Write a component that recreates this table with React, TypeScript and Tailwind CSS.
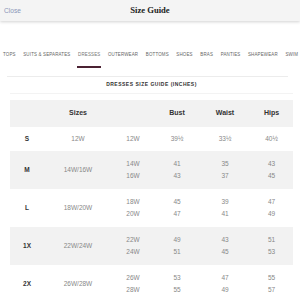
import React from "react";

const tabs = ["TOPS", "SUITS & SEPARATES", "DRESSES", "OUTERWEAR", "BOTTOMS", "SHOES", "BRAS", "PANTIES", "SHAPEWEAR", "SWIM"];

const rows = [
  { label: "S", size: "12W", sub: ["12W"], bust: ["39½"], waist: ["33½"], hips: ["40½"] },
  { label: "M", size: "14W/16W", sub: ["14W", "16W"], bust: ["41", "43"], waist: ["35", "37"], hips: ["43", "45"] },
  { label: "L", size: "18W/20W", sub: ["18W", "20W"], bust: ["45", "47"], waist: ["39", "41"], hips: ["47", "49"] },
  { label: "1X", size: "22W/24W", sub: ["22W", "24W"], bust: ["49", "51"], waist: ["43", "45"], hips: ["51", "53"] },
  { label: "2X", size: "26W/28W", sub: ["26W", "28W"], bust: ["53", "55"], waist: ["47", "49"], hips: ["55", "57"] },
];

const grid = "grid grid-cols-[34px_68px_42px_46px_50px_43px] items-center text-center";

function Cell({ lines }: { lines: string[] }) {
  return (
    <div className="flex flex-col leading-[12.5px]">
      {lines.map((l, i) => (
        <span key={i}>{l}</span>
      ))}
    </div>
  );
}

export default function App() {
  return (
    <main className="w-[300px] h-[300px] overflow-hidden bg-white font-['Liberation_Sans',Arial,sans-serif]">
      <header className="relative h-[21px] bg-[#f4f4f4] shadow-[0_1px_3px_rgba(0,0,0,0.18)] flex items-center">
        <button className="ml-[4px] text-[6.6px] text-[#8a96b8]">Close</button>
        <h1 className="absolute left-0 right-0 text-center text-[8.6px] font-bold text-[#222] font-['Liberation_Serif',serif] pointer-events-none">
          Size Guide
        </h1>
      </header>

      <nav className="mt-[30px] flex gap-[5.6px] pl-[2px] whitespace-nowrap overflow-hidden text-[4.45px] tracking-[0.16px] text-[#666]">
        {tabs.map((t) => (
          <span
            key={t}
            className={
              t === "DRESSES"
                ? "shrink-0 leading-[8px] pb-[7px] px-[1px] border-b-2 border-[#4b2233] text-[#777]"
                : "shrink-0 leading-[8px] pb-[7px] px-[1px] border-b-2 border-transparent"
            }
          >
            {t}
          </span>
        ))}
      </nav>
      <div className="mt-[8px] ml-[7px] w-[281px] h-px bg-[#ececec]" />

      <div className="ml-[10px] w-[283px]">
        <div className="mt-[4px] pb-[5px] border-b border-[#f3f3f3] text-center text-[5px] leading-[7px] font-bold tracking-[0.5px] text-[#333]">
          DRESSES SIZE GUIDE (INCHES)
        </div>

        <div className={`${grid} mt-[6px] h-[27px] bg-[#f2f2f2] text-[7px] font-bold text-[#333]`}>
          <span />
          <span>Sizes</span>
          <span />
          <span>Bust</span>
          <span>Waist</span>
          <span>Hips</span>
        </div>

        {rows.map((r, i) => (
          <div
            key={r.label}
            className={`${grid} text-[6.5px] text-[#888] ${i === 0 ? "h-[24px]" : "h-[38px]"} ${i % 2 === 1 ? "bg-[#f2f2f2]" : "bg-white"}`}
          >
            <span className="font-bold text-[#333]">{r.label}</span>
            <span>{r.size}</span>
            <Cell lines={r.sub} />
            <Cell lines={r.bust} />
            <Cell lines={r.waist} />
            <Cell lines={r.hips} />
          </div>
        ))}
      </div>
    </main>
  );
}
